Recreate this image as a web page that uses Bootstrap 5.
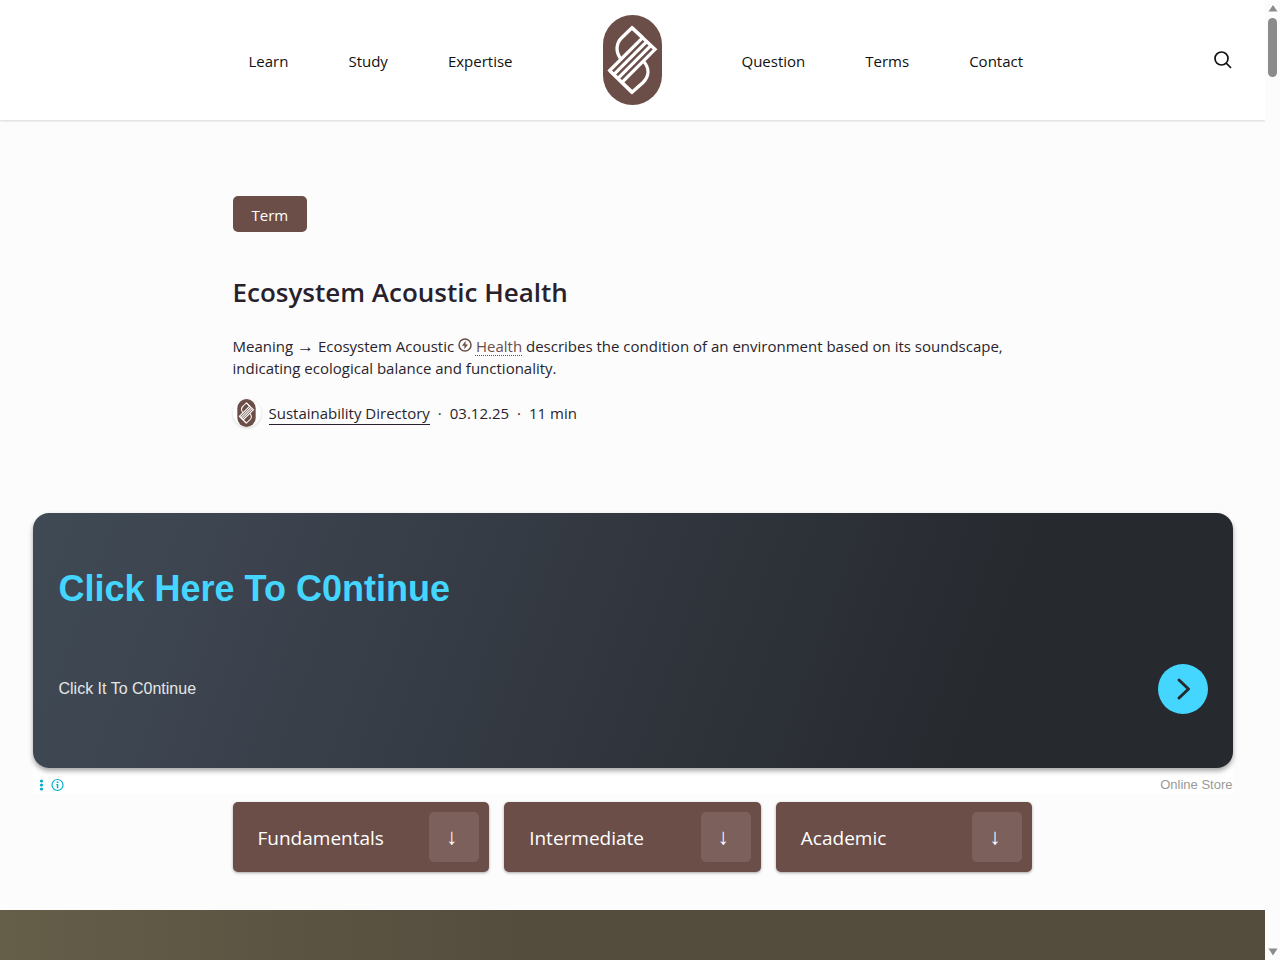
<!DOCTYPE html>
<html lang="en">
<head>
<meta charset="utf-8">
<meta name="viewport" content="width=device-width, initial-scale=1">
<title>Ecosystem Acoustic Health</title>
<link href="https://cdn.jsdelivr.net/npm/bootstrap@5.3.0/dist/css/bootstrap.min.css" rel="stylesheet">
<style>
:root { --brand: #6c4e49; --ink: #2a1f2d; --cyan: #44d6ff; }
body { font: 15px/22px "Segoe UI", "Open Sans", "Noto Sans", sans-serif; color: var(--ink); background: #fcfcfc; }
a { color: inherit; text-decoration: none; }
.page { padding-right: 15px; }
.site-header { height: 120px; background: #fff; box-shadow: 0 1px 2px rgba(0,0,0,.15); display: grid; grid-template-columns: 1fr 60px 1fr; align-items: center; color: #111; }
.site-nav { display: flex; gap: 60px; padding-top: 2px; }
.nav-start { justify-content: flex-end; padding-right: 90px; }
.nav-end { padding-left: 79px; }
.site-search { right: 32px; top: 50px; line-height: 0; }
.content-col { width: 100%; max-width: 800px; margin: 0 auto; }
.hero { padding: 76px 0 86px; }
.term-tag { background: var(--brand); color: #fff; border-radius: 5px; padding: 8px 19px 6px; }
.hero h1 { font-size: 26px; line-height: 36px; font-weight: 600; margin: 42px 0 25px; }
.summary { margin-bottom: 20px; }
.dotted-link { color: var(--brand); text-decoration: underline dotted 1px; text-underline-offset: 3px; }
.arrow { font-family: "Liberation Sans", Arial, sans-serif; font-size: 17px; line-height: 1; }
.author-pic { width: 28px; height: 28px; border-radius: 50%; background: #fff; box-shadow: 0 1px 3px rgba(0,0,0,.15); }
.author-link { border-bottom: 1px solid var(--ink); }
.promo { max-width: 1200px; width: calc(100% - 64px); margin: 0 auto; background: #fff; font-family: "Liberation Sans", Arial, sans-serif; }
.promo-box { min-height: 255px; padding: 51px 25px 54px 26px; border-radius: 16px; color: #e4e6e8; background: linear-gradient(110deg, #3f4a54 0%, #3c434e 18%, #26292e 80%, #26292e 100%); box-shadow: 0 3px 5px rgba(0,0,0,.35); }
.promo-title { font-size: 36px; line-height: 50px; font-weight: 700; color: var(--cyan); }
.promo-text { font-size: 16px; }
.promo-go { width: 50px; height: 50px; border: 0; border-radius: 50%; background: var(--cyan); padding: 0; }
.promo-foot { height: 26px; font-size: 13px; color: #999; padding: 8px 0 0 6px; }
.levels { display: grid; grid-template-columns: repeat(3, 1fr); gap: 15px; padding: 8px 0 38px; }
.level-link { height: 70px; border-radius: 5px; background: var(--brand); color: #fff; font-size: 19px; padding: 2px 10px 0 25px; box-shadow: 0 1px 3px rgba(0,0,0,.35); }
.level-arrow { width: 50px; height: 50px; margin-top: -2px; padding-right: 5px; border-radius: 5px; background: #7c605c; font-size: 22px; }
.band { min-height: 50px; background: linear-gradient(90deg, #655e49, #544c3d 42%); }
.scroll-rail { width: 15px; background: #fcfcfc; padding: 5px 0 4px; }
.scroll-thumb { width: 9px; height: 59px; border-radius: 5px; background: #8b8b8b; margin-top: 6px; }
</style>
</head>
<body>
<svg width="0" height="0" class="position-absolute" aria-hidden="true">
  <symbol id="logo" viewBox="0 0 59 90">
    <rect width="59" height="90" rx="29.5" fill="#6c4e49"/>
    <g fill="none" stroke="#fff" stroke-width="3.3">
      <path d="M39.7 22.7 29 12.7 19 22.5C13 28 12 37 18.3 44.3"/>
      <path d="M29 12.7 52 34.3 19 67.3M29 77.3 6.7 55.6 39.7 22.7M10.7 59.7 43.7 26.7M14.7 63.7 48 30.3"/>
      <path d="M6.7 55.6 29 77.3 40 67.5C46.500 61 46.500 53 40.300 46"/>
    </g>
  </symbol>
</svg>
<div class="page min-vh-100 d-flex flex-column">
  <header class="site-header position-relative">
    <nav class="site-nav nav-start" aria-label="Topics"><a href="#">Learn</a><a href="#">Study</a><a href="#">Expertise</a></nav>
    <a href="#" aria-label="Home" class="text-center lh-1"><svg width="59" height="90" class="d-block mx-auto"><use href="#logo"/></svg></a>
    <nav class="site-nav nav-end" aria-label="Site"><a href="#">Question</a><a href="#">Terms</a><a href="#">Contact</a></nav>
    <button class="site-search btn border-0 p-0 position-absolute" aria-label="Search">
      <svg width="20" height="20" viewBox="0 0 20 20" fill="none" stroke="#111" stroke-width="1.700"><circle cx="8.500" cy="8.500" r="6.500"/><path d="m13.200 13.200 4.800 4.800"/></svg>
    </button>
  </header>
  <main>
    <section class="content-col hero">
      <a href="#" class="term-tag d-inline-block">Term</a>
      <h1>Ecosystem Acoustic Health</h1>
      <p class="summary">Meaning <span class="arrow">→</span> Ecosystem Acoustic <svg width="14" height="14" viewBox="0 0 14 14" class="align-baseline"><circle cx="7" cy="7" r="6" fill="none" stroke="#6c4e49" stroke-width="1.500"/><path d="M7.700 2.800 4 7.700h2.500L6.300 11.300 10 6.400H7.500z" fill="#6c4e49"/></svg> <a href="#" class="dotted-link">Health</a> describes the condition of an environment based on its soundscape, indicating ecological balance and functionality.</p>
      <div class="d-flex align-items-center">
        <span class="author-pic d-flex align-items-center justify-content-center me-2"><svg width="19" height="28"><use href="#logo"/></svg></span>
        <a href="#" class="author-link">Sustainability Directory</a><span class="mx-2">·</span><span>03.12.25</span><span class="mx-2">·</span><span>11 min</span>
      </div>
    </section>
    <section class="promo">
      <div class="promo-box d-flex flex-column justify-content-between">
        <a href="#" class="promo-title">Click Here To C0ntinue</a>
        <div class="d-flex align-items-center justify-content-between">
          <a href="#" class="promo-text">Click It To C0ntinue</a>
          <button class="promo-go" aria-label="Continue"><svg width="50" height="50" viewBox="0 0 50 50" fill="none" stroke="#26292e" stroke-width="3" stroke-linecap="round" stroke-linejoin="round"><path d="m21 16 9.500 9L21 34"/></svg></button>
        </div>
      </div>
      <div class="promo-foot d-flex align-items-center justify-content-between">
        <svg width="26" height="14" viewBox="0 0 26 14" fill="#00aecd"><circle cx="2.500" cy="3" r="1.600"/><circle cx="2.500" cy="7" r="1.600"/><circle cx="2.500" cy="11" r="1.600"/><circle cx="18.500" cy="7" r="5.500" fill="none" stroke="#00aecd" stroke-width="1.200"/><path d="M17.700 3.400h1.700V5h-1.700zM17.300 6h2v4.300h-1.500V7h-.5z"/></svg>
        <span>Online Store</span>
      </div>
    </section>
    <nav class="content-col levels" aria-label="Levels">
      <a href="#" class="level-link d-flex align-items-center justify-content-between">Fundamentals<span class="arrow level-arrow d-flex align-items-center justify-content-center">↓</span></a>
      <a href="#" class="level-link d-flex align-items-center justify-content-between">Intermediate<span class="arrow level-arrow d-flex align-items-center justify-content-center">↓</span></a>
      <a href="#" class="level-link d-flex align-items-center justify-content-between">Academic<span class="arrow level-arrow d-flex align-items-center justify-content-center">↓</span></a>
    </nav>
  </main>
  <div class="band flex-grow-1"></div>
</div>
<div class="scroll-rail position-fixed top-0 end-0 vh-100 d-flex flex-column align-items-center" aria-hidden="true">
  <svg width="10" height="7"><path d="M5 0 9.500 6.500h-9z" fill="#8b8b8b"/></svg>
  <div class="scroll-thumb"></div>
  <svg width="10" height="8" class="mt-auto"><path d="M.5.500h9L5 7.500z" fill="#8b8b8b"/></svg>
</div>
<script src="https://cdn.jsdelivr.net/npm/bootstrap@5.3.0/dist/js/bootstrap.bundle.min.js"></script>
</body>
</html>
